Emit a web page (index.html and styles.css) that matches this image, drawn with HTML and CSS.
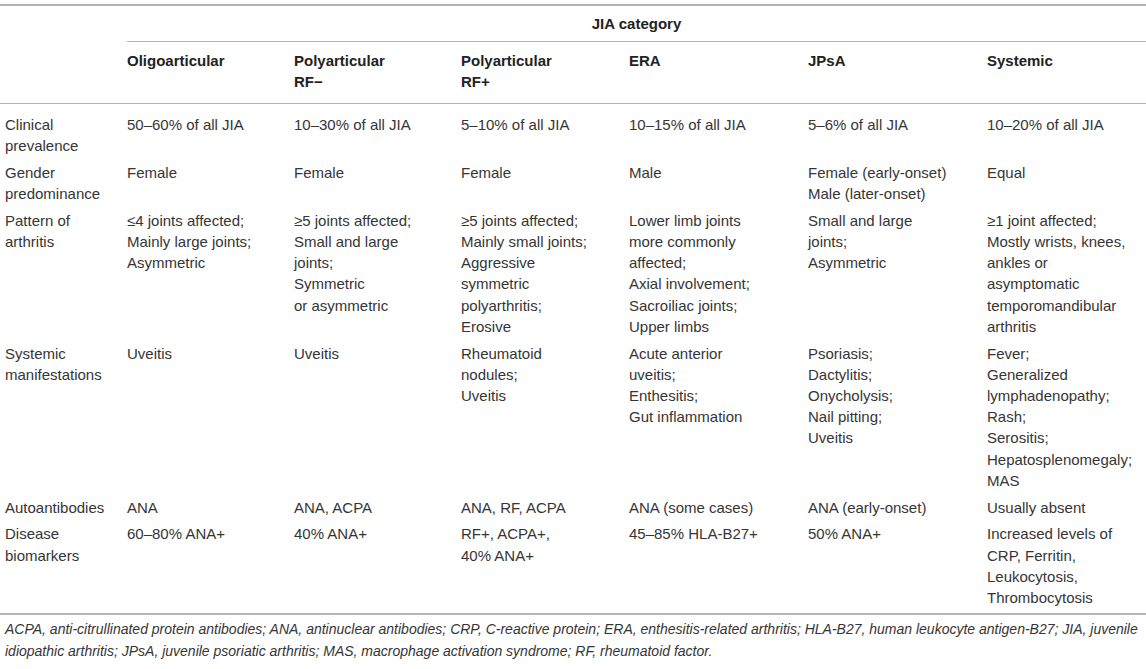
FILE: index.html
```html
<!DOCTYPE html>
<html>
<head>
<meta charset="utf-8">
<link rel="stylesheet" href="styles.css">
</head>
<body>
<div class="wrap">
<table class="jia">
  <colgroup>
    <col class="c-label">
    <col class="c-std">
    <col class="c-std">
    <col class="c-std2">
    <col class="c-wide">
    <col class="c-wide">
    <col class="c-last">
  </colgroup>
  <thead>
    <tr class="h-top">
      <th></th>
      <th colspan="6" class="group"><div class="group-label">JIA category</div></th>
    </tr>
    <tr class="h-cols">
      <th></th>
      <th>Oligoarticular</th>
      <th>Polyarticular<br>RF−</th>
      <th>Polyarticular<br>RF+</th>
      <th>ERA</th>
      <th>JPsA</th>
      <th>Systemic</th>
    </tr>
  </thead>
  <tbody>
    <tr class="first">
      <td>Clinical<br>prevalence</td>
      <td>50–60% of all JIA</td>
      <td>10–30% of all JIA</td>
      <td>5–10% of all JIA</td>
      <td>10–15% of all JIA</td>
      <td>5–6% of all JIA</td>
      <td>10–20% of all JIA</td>
    </tr>
    <tr>
      <td>Gender<br>predominance</td>
      <td>Female</td>
      <td>Female</td>
      <td>Female</td>
      <td>Male</td>
      <td>Female (early-onset)<br>Male (later-onset)</td>
      <td>Equal</td>
    </tr>
    <tr>
      <td>Pattern of<br>arthritis</td>
      <td>≤4 joints affected;<br>Mainly large joints;<br>Asymmetric</td>
      <td>≥5 joints affected;<br>Small and large<br>joints;<br>Symmetric<br>or asymmetric</td>
      <td>≥5 joints affected;<br>Mainly small joints;<br>Aggressive<br>symmetric<br>polyarthritis;<br>Erosive</td>
      <td>Lower limb joints<br>more commonly<br>affected;<br>Axial involvement;<br>Sacroiliac joints;<br>Upper limbs</td>
      <td>Small and large<br>joints;<br>Asymmetric</td>
      <td>≥1 joint affected;<br>Mostly wrists, knees,<br>ankles or<br>asymptomatic<br>temporomandibular<br>arthritis</td>
    </tr>
    <tr>
      <td>Systemic<br>manifestations</td>
      <td>Uveitis</td>
      <td>Uveitis</td>
      <td>Rheumatoid<br>nodules;<br>Uveitis</td>
      <td>Acute anterior<br>uveitis;<br>Enthesitis;<br>Gut inflammation</td>
      <td>Psoriasis;<br>Dactylitis;<br>Onycholysis;<br>Nail pitting;<br>Uveitis</td>
      <td>Fever;<br>Generalized<br>lymphadenopathy;<br>Rash;<br>Serositis;<br>Hepatosplenomegaly;<br>MAS</td>
    </tr>
    <tr>
      <td>Autoantibodies</td>
      <td>ANA</td>
      <td>ANA, ACPA</td>
      <td>ANA, RF, ACPA</td>
      <td>ANA (some cases)</td>
      <td>ANA (early-onset)</td>
      <td>Usually absent</td>
    </tr>
    <tr class="last">
      <td>Disease<br>biomarkers</td>
      <td>60–80% ANA+</td>
      <td>40% ANA+</td>
      <td>RF+, ACPA+,<br>40% ANA+</td>
      <td>45–85% HLA-B27+</td>
      <td>50% ANA+</td>
      <td>Increased levels of<br>CRP, Ferritin,<br>Leukocytosis,<br>Thrombocytosis</td>
    </tr>
  </tbody>
</table>
<p class="note">ACPA, anti-citrullinated protein antibodies; ANA, antinuclear antibodies; CRP, C-reactive protein; ERA, enthesitis-related arthritis; HLA-B27, human leukocyte antigen-B27; JIA, juvenile idiopathic arthritis; JPsA, juvenile psoriatic arthritis; MAS, macrophage activation syndrome; RF, rheumatoid factor.</p>
</div>
</body>
</html>
```

FILE: styles.css
```css
html, body {
  margin: 0;
  padding: 0;
  background: #ffffff;
}

.wrap {
  width: 1146px;
  padding-top: 4px;
  font-family: "Liberation Sans", Arial, sans-serif;
  color: #353535;
}

.jia {
  width: 1146px;
  border-collapse: collapse;
  table-layout: fixed;
  font-size: 15px;
  line-height: 21.2px;
}

.c-label { width: 122px; }
.c-std { width: 167px; }
.c-std2 { width: 168px; }
.c-wide { width: 179px; }
.c-last { width: auto; }

.jia thead tr.h-top {
  border-top: 2px solid #b4b4b4;
}

.jia th {
  font-weight: bold;
  color: #222222;
  text-align: left;
  vertical-align: top;
  padding: 0 5px;
  line-height: 21.6px;
}

.jia .h-top th {
  padding-top: 7px;
  padding-bottom: 6px;
}

.jia .h-top th.group {
  padding: 0 0 0 5px;
}

.group-label {
  text-align: center;
  padding: 7px 0 6px;
  border-bottom: 1px solid #b4b4b4;
}

.jia .h-cols th {
  padding-top: 8px;
  padding-bottom: 10px;
  border-bottom: 1px solid #b4b4b4;
}

.jia td {
  vertical-align: top;
  padding: 3px 5px 2.6px;
  white-space: nowrap;
}

.jia tr.first td {
  padding-top: 10px;
}

.jia tr.last td {
  padding-bottom: 5px;
}

.jia tbody {
  border-bottom: 2px solid #b4b4b4;
}

.note {
  margin: 3px 0 0;
  padding: 0 3px 0 5px;
  font-style: italic;
  font-size: 14px;
  line-height: 22px;
  color: #353535;
}
```
